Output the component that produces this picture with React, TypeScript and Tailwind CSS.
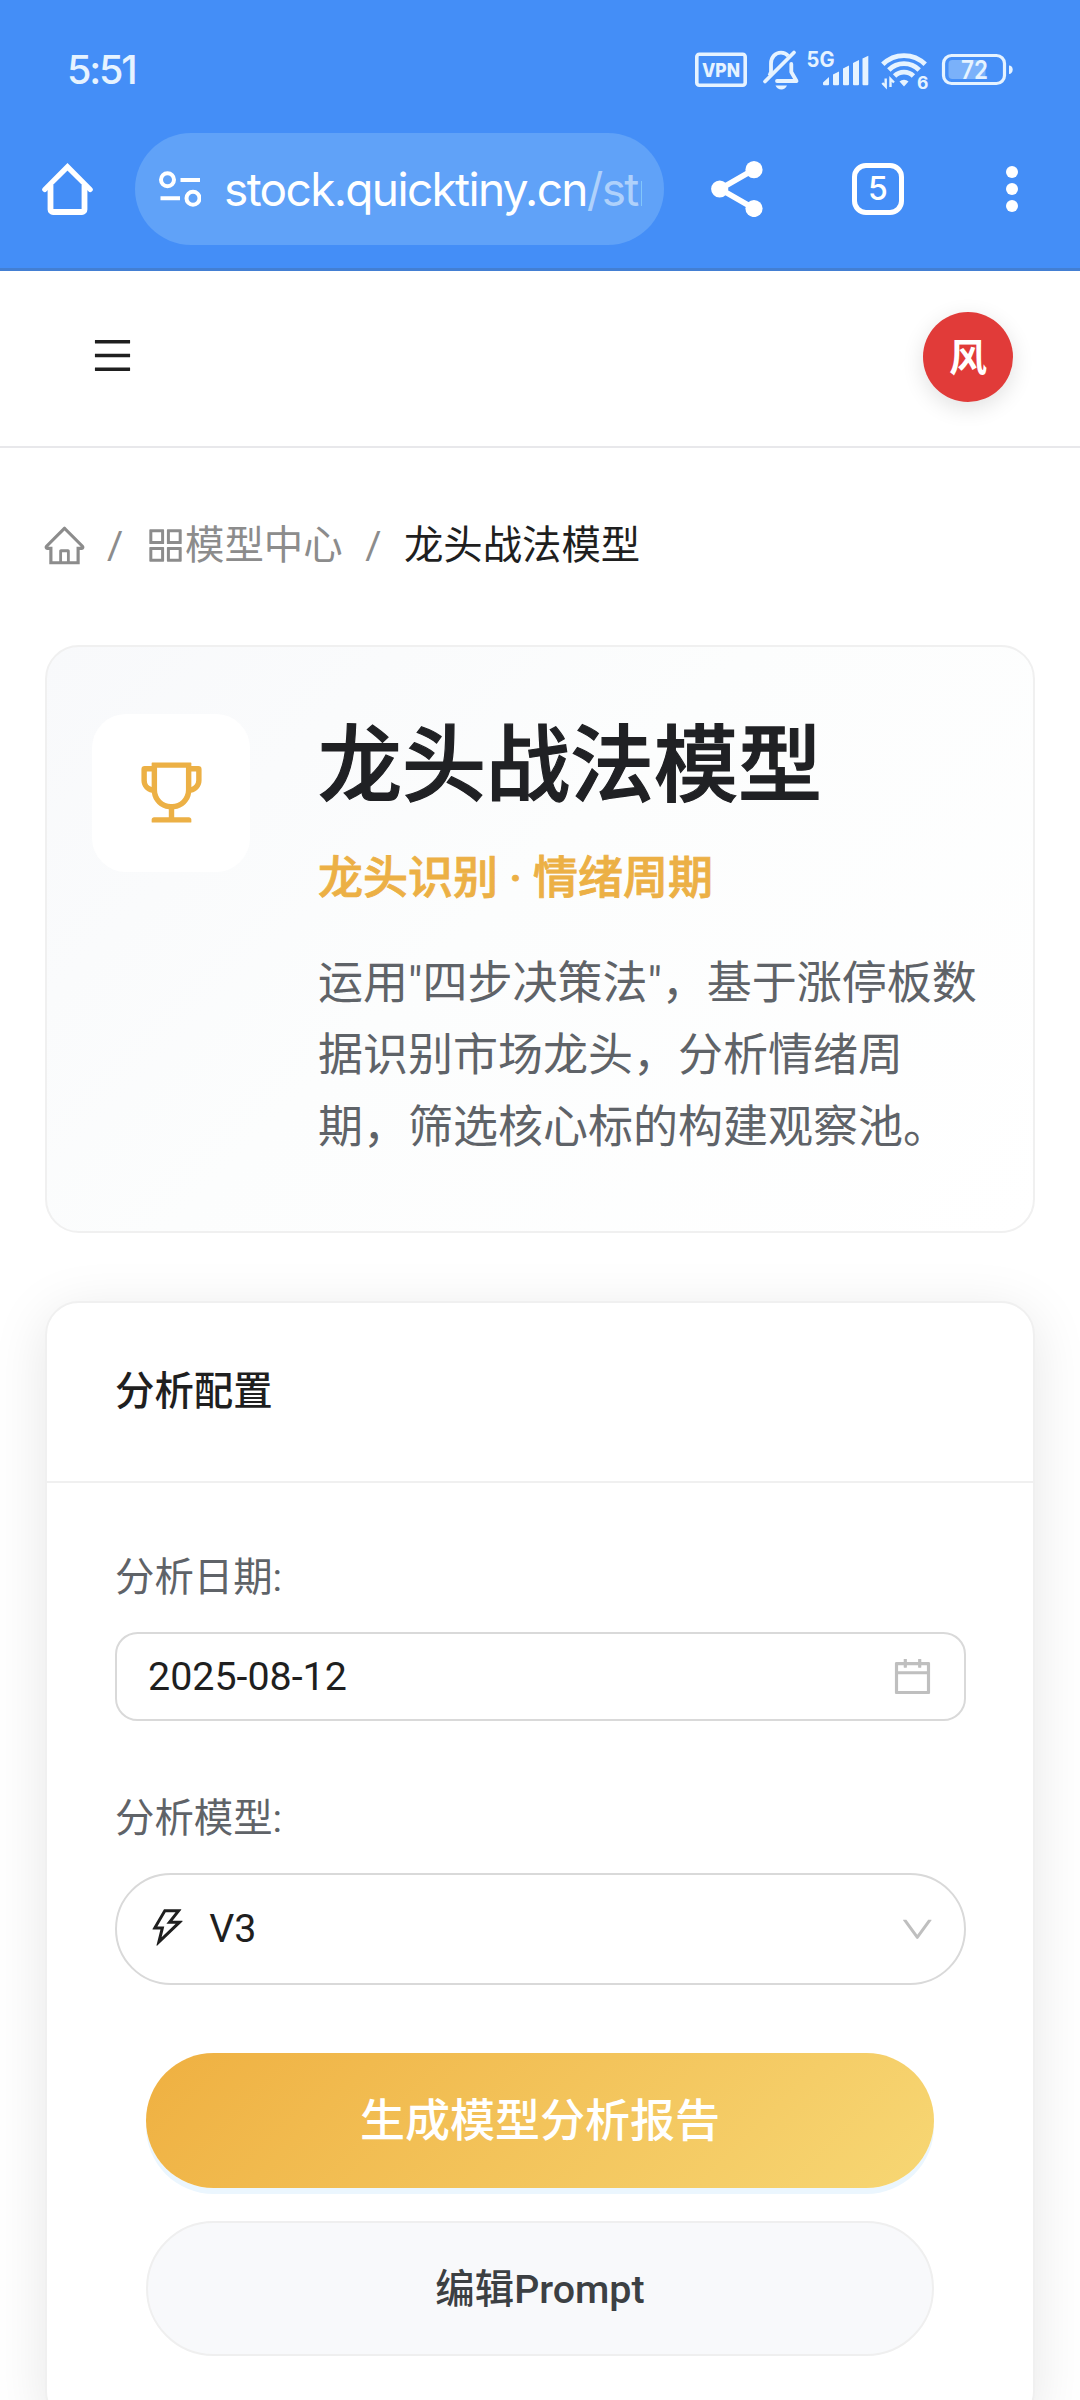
import React, { useState } from 'react';
import {
  AiOutlineAppstore,
  AiOutlineCalendar,
  AiOutlineDown,
  AiOutlineHome,
  AiOutlineMenu,
  AiOutlineThunderbolt,
  AiOutlineTrophy,
} from 'react-icons/ai';

// System status bar: clock on the left, radios and battery on the right
const StatusBar: React.FC = () => (
  <div className="flex h-[133px] items-start justify-between pl-[67px] pr-[67px] pt-[50px] text-[#e6f3ff]">
    <span className="font-['Inter'] text-[39.5px] font-medium leading-[41px] tracking-[-2.2px]">5:51</span>
    <div className="flex items-start">
      <svg className="h-10 w-[52px] overflow-visible" viewBox="0 0 52 40" fill="none">
        <rect x="1.8" y="4.3" width="48.4" height="31" rx="2.5" stroke="currentColor" strokeWidth="3.6" />
        <text x="26" y="26.7" textAnchor="middle" fontFamily="Inter" fontSize="19" fontWeight="800" fill="currentColor" textLength="38" lengthAdjust="spacingAndGlyphs">VPN</text>
      </svg>
      <svg className="ml-4 h-10 w-9 overflow-visible" viewBox="0 0 36 40" fill="none">
        <path d="M6.5 25.5 8 22V13.5C8 7 12.5 2.7 18 2.7c3 0 5.5 1.2 7.3 3.2" stroke="currentColor" strokeWidth="3.8" />
        <path d="M28.3 14v8L33.5 31H14" stroke="currentColor" strokeWidth="3.8" strokeLinejoin="round" strokeLinecap="round" />
        <path d="M2 31.5 31 2.5" stroke="currentColor" strokeWidth="3.8" strokeLinecap="round" />
        <path d="M12.5 35.5h11.5c-1.2 2.8-3.2 4-5.7 4s-4.6-1.2-5.8-4z" fill="currentColor" />
      </svg>
      <svg className="ml-2 h-10 w-[61px] overflow-visible" viewBox="0 0 61 40" fill="currentColor">
        <text x="-0.5" y="17" fontFamily="Inter" fontSize="21" fontWeight="700" textLength="28" lengthAdjust="spacingAndGlyphs">5G</text>
        <path d="M16 32.5 22 27v7.2a1 1 0 0 1-1 1h-4a1 1 0 0 1-1-1z" />
        <path d="M26 24.5 32 21.5v12.7a1 1 0 0 1-1 1h-4a1 1 0 0 1-1-1z" />
        <path d="M36 18.5 42 15.5v18.7a1 1 0 0 1-1 1h-4a1 1 0 0 1-1-1z" />
        <path d="M46 13 52 10v24.2a1 1 0 0 1-1 1h-4a1 1 0 0 1-1-1z" />
        <path d="M55.5 8.5 61.3 5.8v28.4a1 1 0 0 1-1 1h-3.8a1 1 0 0 1-1-1z" />
      </svg>
      <svg className="ml-[13px] h-10 w-[46px] overflow-visible" viewBox="0 0 46 40" fill="none">
        <path d="M1.8 14.3a30 30 0 0 1 42.4 0" stroke="currentColor" strokeWidth="4.8" />
        <path d="M7.8 20a21.5 21.5 0 0 1 30.4 0" stroke="currentColor" strokeWidth="4.8" />
        <path d="M13.6 26a13.3 13.3 0 0 1 18.8 0" stroke="currentColor" strokeWidth="4.8" />
        <path d="M18.5 31.5a6.5 6.5 0 0 1 9 0L23 36.5z" fill="currentColor" />
        <path d="M4.7 28.5v8L1.3 33M9.5 37v-8L13 32.5" stroke="currentColor" strokeWidth="2.4" />
        <text x="36" y="38.5" fontFamily="Inter" fontSize="17.5" fontWeight="700" fill="currentColor">6</text>
      </svg>
      <svg className="ml-[15px] h-10 w-[71px] overflow-visible" viewBox="0 0 71 40" fill="none">
        <rect x="1.5" y="5.5" width="61" height="28" rx="8" stroke="currentColor" strokeWidth="3.2" />
        <rect x="6.5" y="10" width="37" height="19" rx="4" fill="#8cbcfb" fillOpacity=".75" />
        <path d="M67 15.5c2 0 3.7 1.2 3.7 4s-1.7 4.5-3.7 4.5z" fill="currentColor" />
        <text x="32.5" y="28.5" textAnchor="middle" fontFamily="Inter" fontSize="25" fontWeight="600" fill="currentColor" textLength="27" lengthAdjust="spacingAndGlyphs">72</text>
      </svg>
    </div>
  </div>
);

const BrowserToolbar: React.FC<{ tabCount: number }> = ({ tabCount }) => (
  <div className="flex h-[138px] items-start border-b-[3px] border-[#437fd3] pl-[42px] pr-[62px] text-white">
    <div className="flex h-28 w-full items-center">
      <svg className="h-[52px] w-[51px] shrink-0" viewBox="0 0 51 52" fill="none" stroke="currentColor">
        <path d="M2.8 26.5 25.5 3.8 48.2 26.5" strokeWidth="5.2" strokeLinecap="round" />
        <path d="M8.5 22v24.5a2.5 2.5 0 0 0 2.5 2.5h29a2.5 2.5 0 0 0 2.5-2.5V22" strokeWidth="5.8" />
      </svg>
      <div className="ml-[42px] flex h-28 w-[529px] shrink-0 items-center rounded-full bg-[#60a2f8] pl-6 pr-[22px]">
        <svg className="h-9 w-[42px] shrink-0" viewBox="0 0 42 36" fill="none" stroke="currentColor" strokeWidth="4">
          <circle cx="8.5" cy="8.8" r="6.5" />
          <path d="M21.5 9h19.5M1.5 27.3h19.5" />
          <circle cx="34" cy="27.3" r="6.5" />
        </svg>
        <div className="ml-[23px] flex-1 overflow-hidden whitespace-nowrap font-['Inter'] text-[46px] leading-[60px] tracking-[-1.65px]">
          stock.quicktiny.cn<span className="text-[#afd1fb]">/strategy</span>
        </div>
      </div>
      <svg className="ml-[47px] h-14 w-[52px] shrink-0" viewBox="0 0 52 56" fill="currentColor">
        <path d="M43 8.5 9 28 43 47.5" fill="none" stroke="currentColor" strokeWidth="5.5" />
        <circle cx="43" cy="8.7" r="8.6" />
        <circle cx="8.7" cy="28" r="8.6" />
        <circle cx="43" cy="47.5" r="8.6" />
      </svg>
      <div className="ml-[89px] flex h-[52px] w-[52px] shrink-0 items-center justify-center rounded-[14px] border-[5.5px] border-white font-['Inter'] text-[32px] font-medium leading-none">
        {tabCount}
      </div>
      <div className="ml-auto flex flex-col gap-[5px]">
        <i className="block h-3 w-3 rounded-full bg-white" />
        <i className="block h-3 w-3 rounded-full bg-white" />
        <i className="block h-3 w-3 rounded-full bg-white" />
      </div>
    </div>
  </div>
);

const SiteHeader: React.FC = () => (
  <header className="flex h-[177px] items-start justify-between border-b-2 border-[#e8e8eb] pl-[90px] pr-[67px] pt-[41px]">
    <button className="mt-[21px] text-[#1f1f1f]" aria-label="menu">
      <AiOutlineMenu className="h-[45px] w-[45px]" />
    </button>
    <div className="flex h-[90px] w-[90px] items-center justify-center rounded-full bg-[#e13b39] pt-px text-[38px] font-bold leading-none text-white shadow-[0_6px_22px_rgba(0,0,0,0.12)]">
      风
    </div>
  </header>
);

const Breadcrumb: React.FC = () => (
  <nav className="flex h-[62px] items-center text-[39.4px] leading-[62px] text-[#8c8c8c]">
    <AiOutlineHome className="-mx-[2.8px] mb-0.5 h-[45px] w-[45px]" />
    <span className="mx-[22.5px]">/</span>
    <AiOutlineAppstore className="-mx-[2.8px] mb-0.5 h-[45px] w-[45px]" />
    <span>模型中心</span>
    <span className="mx-[22.5px]">/</span>
    <span className="text-[#1f1f1f]">龙头战法模型</span>
  </nav>
);

const ModelHero: React.FC = () => (
  <section className="mt-[68px] flex h-[588px] gap-[68px] rounded-[34px] border-2 border-[#f0f0f0] bg-linear-[135deg,#f8f9fb_0%,#fcfdfd_45%,#ffffff_100%] px-[45px] pt-[67px]">
    <div className="flex h-[158px] w-[158px] shrink-0 items-center justify-center rounded-[34px] bg-white text-[#ecb045]">
      <AiOutlineTrophy className="mb-0.5 h-[77px] w-[77px]" />
    </div>
    <div className="whitespace-nowrap">
      <h1 className="pt-[3px] text-[84px] font-medium leading-[100px] text-[#202124] [-webkit-text-stroke:1.2px_#202124]">龙头战法模型</h1>
      <p className="mt-[27px] text-[45px] font-medium leading-[70px] text-[#ecb045] [-webkit-text-stroke:0.8px_#ecb045]">龙头识别 · 情绪周期</p>
      <p className="mt-[34px] text-[45px] leading-[72px] text-[#5f6368]">
        运用"四步决策法"，基于涨停板数
        <br />
        据识别市场龙头，分析情绪周
        <br />
        期，筛选核心标的构建观察池。
      </p>
    </div>
  </section>
);

const AnalysisConfig: React.FC = () => {
  const [date] = useState('2025-08-12');
  const [model] = useState('V3');

  return (
    <section className="mt-[68px] rounded-[34px] border-2 border-[#f0f0f0] bg-white shadow-[0_11px_56px_rgba(0,0,0,0.1)]">
      <h2 className="flex h-[180px] items-center border-b-2 border-[#f0f0f0] px-[68px] text-[39.4px] font-medium text-[#1f1f1f]">
        分析配置
      </h2>
      <div className="pb-[67px] pl-[68px] pr-[67px] pt-[64px] text-[39.4px]">
        <label className="block h-[62px] leading-[62px] text-[#5f6368]">分析日期:</label>
        <div className="mt-[23px] flex h-[89px] items-center justify-between rounded-[22.5px] border-2 border-[#d9d9d9] px-[31px] text-[#1f1f1f]">
          <span>{date}</span>
          <AiOutlineCalendar className="-mr-[2px] h-[45px] w-[45px] text-[#bfbfbf]" />
        </div>

        <label className="mt-[67px] block h-[62px] leading-[62px] text-[#5f6368]">分析模型:</label>
        <div className="mt-[23px] flex h-[112px] items-center rounded-full border-2 border-[#d9d9d9] px-[31px] text-[#1f1f1f]">
          <AiOutlineThunderbolt className="-ml-[2.8px] mb-1 h-[45px] w-[45px]" />
          <span className="ml-[19px]">{model}</span>
          <AiOutlineDown className="-mr-[4px] ml-auto h-[38.6px] w-[38.6px] text-[#bfbfbf]" />
        </div>

        <div className="mt-[68px] flex flex-col gap-[33px] pl-[31px] pr-8">
          <button className="h-[135px] rounded-full bg-linear-[135deg,#efb041_0%,#f7d774_100%] pt-0.5 text-[45px] font-medium text-white shadow-[0_6px_0_#ebf6fe]">
            生成模型分析报告
          </button>
          <button className="h-[135px] rounded-full border-2 border-[#efefef] bg-[#f8f9fb] pt-0.5 text-[39.4px] font-medium text-[#3c4043]">
            编辑Prompt
          </button>
        </div>
      </div>
    </section>
  );
};

const App: React.FC = () => {
  return (
    <div className="h-[2400px] w-[1080px] overflow-hidden bg-white font-['Roboto','Noto_Sans_CJK_SC',sans-serif]">
      <div className="bg-[#448ef7]">
        <StatusBar />
        <BrowserToolbar tabCount={5} />
      </div>
      <SiteHeader />
      <main className="px-[45px] pt-[67px]">
        <Breadcrumb />
        <ModelHero />
        <AnalysisConfig />
      </main>
    </div>
  );
};

export default App;
